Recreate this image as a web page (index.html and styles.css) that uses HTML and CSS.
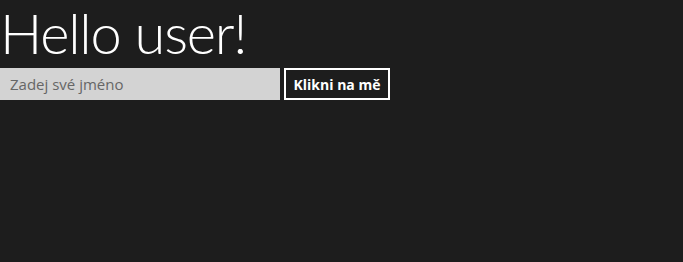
FILE: index.html
```html
<!DOCTYPE html>
<html lang="cs">
<head>
<meta charset="utf-8">
<title>Hello user</title>
<link rel="stylesheet" href="styles.css">
</head>
<body>
<main class="page">
  <h1 class="greeting">Hello user!</h1>
  <div class="form-row">
    <input class="name-input" type="text" placeholder="Zadej své jméno">
    <button class="action-btn" type="button">Klikni na mě</button>
  </div>
</main>
</body>
</html>
```

FILE: styles.css
```css
html, body {
  margin: 0;
  padding: 0;
  background: #1d1d1d;
  height: 100%;
}
.page {
  font-family: "Open Sans", "Noto Sans", sans-serif;
  color: #ffffff;
}
.greeting {
  margin: 0 0 2px 0;
  padding: 0;
  font-family: Lato, "Open Sans", sans-serif;
  font-size: 56px;
  font-weight: 300;
  line-height: 66px;
  letter-spacing: -1.2px;
}
.form-row {
  display: flex;
  gap: 4px;
  height: 32px;
}
.name-input {
  box-sizing: border-box;
  width: 280px;
  height: 32px;
  margin: 0;
  border: none;
  padding: 0 10px;
  background: #d3d3d3;
  font-family: "Open Sans", "Noto Sans", sans-serif;
  font-size: 15px;
  color: #333;
  outline: none;
}
.name-input::placeholder {
  color: #666666;
  opacity: 1;
}
.action-btn {
  box-sizing: border-box;
  width: 106px;
  height: 32px;
  margin: 0;
  padding: 0;
  border: 2px solid #ffffff;
  background: #1d1d1d;
  color: #ffffff;
  font-family: "Open Sans", "Noto Sans", sans-serif;
  font-size: 14px;
  font-weight: 700;
}
```
